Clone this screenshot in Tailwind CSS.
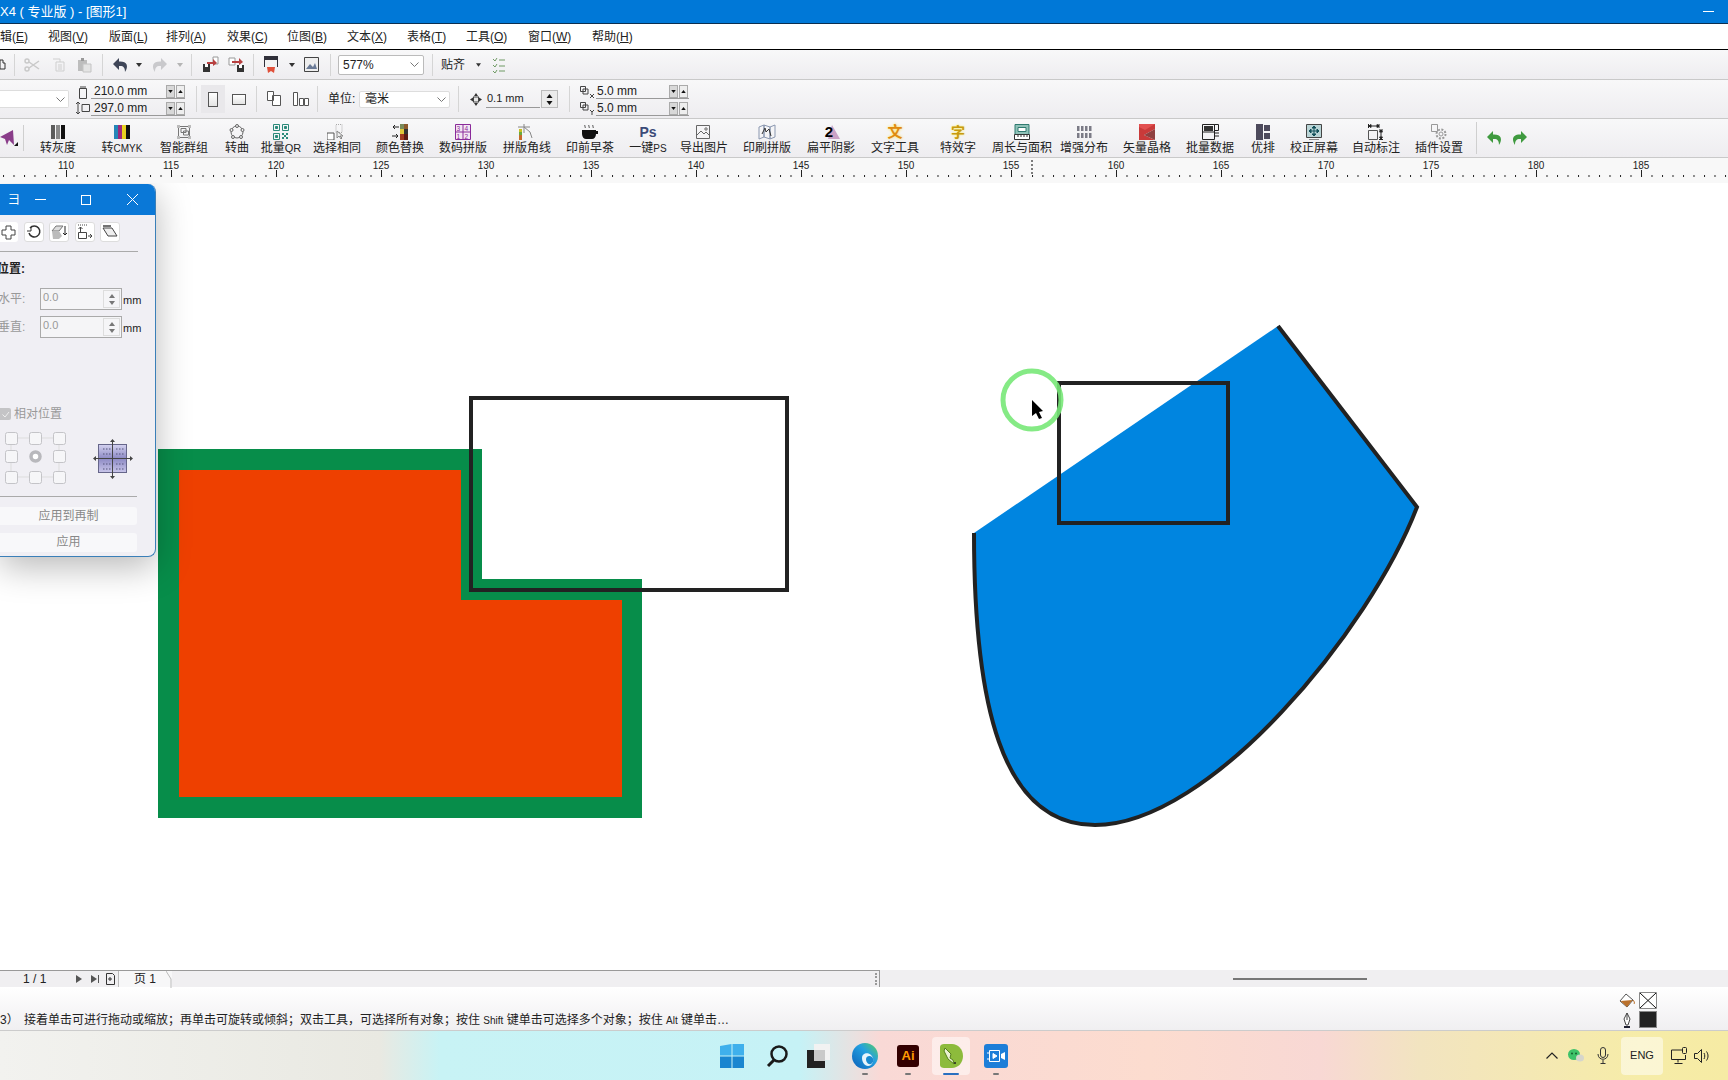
<!DOCTYPE html>
<html lang="zh-CN">
<head>
    <meta charset="UTF-8">
    <title>CorelDRAW X4 - 图形1</title>
    <script src="https://cdn.jsdelivr.net/npm/@tailwindcss/browser@4"></script>
</head>
<body class="font-['Liberation_Sans','Noto_Sans_CJK_SC',sans-serif] text-[12px] text-[#222] overflow-hidden">
<div class="relative w-[1728px] h-[1080px] flex flex-col overflow-hidden bg-white">

    <!-- Title bar -->
    <div class="h-[24px] shrink-0 bg-[#0078d7] border-b border-[#0b2f50] flex items-center justify-between text-white text-[13px]">
        <span class="whitespace-nowrap">X4 ( 专业版 ) - [图形1]</span>
        <div class="w-[11px] h-px bg-white mr-[14px]"></div>
    </div>

    <!-- Menu -->
    <div class="h-[26px] shrink-0 bg-white border-b border-black flex items-center whitespace-nowrap">
        <span class="w-[60px] -ml-[12px] shrink-0">编辑(<u>E</u>)</span>
        <span class="w-[61px] shrink-0">视图(<u>V</u>)</span>
        <span class="w-[57px] shrink-0">版面(<u>L</u>)</span>
        <span class="w-[61px] shrink-0">排列(<u>A</u>)</span>
        <span class="w-[60px] shrink-0">效果(<u>C</u>)</span>
        <span class="w-[60px] shrink-0">位图(<u>B</u>)</span>
        <span class="w-[60px] shrink-0">文本(<u>X</u>)</span>
        <span class="w-[59px] shrink-0">表格(<u>T</u>)</span>
        <span class="w-[62px] shrink-0">工具(<u>O</u>)</span>
        <span class="w-[64px] shrink-0">窗口(<u>W</u>)</span>
        <span>帮助(<u>H</u>)</span>
    </div>

    <!-- Standard toolbar -->
    <div class="h-[30px] shrink-0 bg-linear-to-b from-[#f8f8f9] to-[#eeedf0] border-b border-[#c9c9c9] flex items-center whitespace-nowrap">
        <svg class="w-[6px] h-[16px] shrink-0" viewBox="0 0 6 16"><path d="M0 3h3v3h2v6H0z" fill="none" stroke="#333"/></svg>
        <div class="ml-[8px] w-px h-[22px] bg-[#d5d5d5]"></div>
        <svg class="ml-[9px] w-[16px] h-[16px] shrink-0" viewBox="0 0 16 16" fill="none" stroke="#c9c9c9" stroke-width="1.5"><circle cx="3" cy="4" r="2"/><circle cx="3" cy="12" r="2"/><path d="M5 5l10 7M5 11l10-7"/></svg>
        <svg class="ml-[12px] w-[13px] h-[14px] shrink-0" viewBox="0 0 13 14" fill="none" stroke="#cfcfcf"><path d="M1 1h7v3M4 4h8v9H4zM6 7h4M6 9h4M6 11h4"/></svg>
        <svg class="ml-[12px] w-[15px] h-[16px] shrink-0" viewBox="0 0 15 16"><path d="M1 3h9v11H1z" fill="#bdbdbd"/><path d="M4 1h3v3H4z" fill="#999"/><path d="M6 7h8v8H6z" fill="#e4e4e4" stroke="#c4c4c4"/></svg>
        <div class="ml-[10px] w-px h-[22px] bg-[#d5d5d5]"></div>
        <svg class="ml-[10px] w-[16px] h-[16px] shrink-0" viewBox="0 0 16 16"><path d="M6 1L0 7l6 6V9c4-.5 6 1 6 6 4-6 2-11-6-10.500z" fill="#3f4658"/></svg>
        <svg class="ml-[7px] w-[6px] h-[4px] shrink-0" viewBox="0 0 6 4"><path d="M0 0h6L3 4z" fill="#333"/></svg>
        <svg class="ml-[9px] w-[16px] h-[16px] shrink-0 -scale-x-100" viewBox="0 0 16 16"><path d="M6 1L0 7l6 6V9c4-.5 6 1 6 6 4-6 2-11-6-10.500z" fill="#c9c9cc"/></svg>
        <svg class="ml-[10px] w-[6px] h-[4px] shrink-0" viewBox="0 0 6 4"><path d="M0 0h6L3 4z" fill="#b5b5b5"/></svg>
        <div class="ml-[8px] w-px h-[22px] bg-[#d5d5d5]"></div>
        <svg class="ml-[10px] w-[17px] h-[17px] shrink-0" viewBox="0 0 17 17"><path d="M11 1h5v7h-5z" fill="#fff" stroke="#999"/><path d="M1 8h7v8H1z" fill="#333"/><path d="M3 8h3v3H3z" fill="#fff"/><path d="M5 6h6V3l4 4-4 3V8H5z" fill="#b84040"/></svg>
        <svg class="ml-[9px] w-[17px] h-[17px] shrink-0" viewBox="0 0 17 17"><path d="M1 2h6v7H1z" fill="#fff" stroke="#999"/><path d="M9 9h7v7H9z" fill="#333"/><path d="M11 9h3v3h-3z" fill="#fff"/><path d="M4 5h7V2l4 4-4 3V7H4z" fill="#b84040"/></svg>
        <div class="ml-[8px] w-px h-[22px] bg-[#d5d5d5]"></div>
        <svg class="ml-[10px] w-[14px] h-[18px] shrink-0" viewBox="0 0 14 18"><path d="M0 0h14v11H0z" fill="#30303a"/><path d="M1 4h12v7H1z" fill="#f3f3f3"/><path d="M3 11h8l-1 6-3-2-3 2z" fill="#e0503a"/></svg>
        <svg class="ml-[11px] w-[6px] h-[4px] shrink-0" viewBox="0 0 6 4"><path d="M0 0h6L3 4z" fill="#333"/></svg>
        <svg class="ml-[9px] w-[15px] h-[15px] shrink-0" viewBox="0 0 15 15"><path d="M.5.500h14v14H.5z" fill="#eee" stroke="#444"/><path d="M2 12l4-5 3 3 2-4 2 6z" fill="#6a7a96"/></svg>
        <div class="ml-[11px] w-px h-[22px] bg-[#d5d5d5]"></div>
        <div class="ml-[7px] w-[86px] h-[20px] bg-white border border-[#bbb] rounded-[2px] flex items-center justify-between px-[4px]">
            <span>577%</span>
            <svg class="w-[9px] h-[5px]" viewBox="0 0 9 5"><path d="M.5.500l4 4 4-4" fill="none" stroke="#777"/></svg>
        </div>
        <div class="ml-[8px] w-px h-[22px] bg-[#d5d5d5]"></div>
        <span class="ml-[8px]">贴齐</span>
        <svg class="ml-[11px] w-[5px] h-[4px] shrink-0" viewBox="0 0 6 4"><path d="M0 0h6L3 4z" fill="#333"/></svg>
        <svg class="ml-[12px] w-[12px] h-[16px] shrink-0" viewBox="0 0 12 16" fill="none" stroke="#6f9a64"><path d="M0 2l2 2 2-3M0 8l2 2 2-3M0 14l2 2 2-3M6 3h6M6 9h6M6 14h6"/></svg>
    </div>

    <!-- Property bar -->
    <div class="h-[39px] shrink-0 bg-linear-to-b from-[#f8f8f9] to-[#eeedf0] border-b border-[#c9c9c9] flex items-center whitespace-nowrap">
        <div class="w-[69px] h-[18px] bg-white border-r border-y border-[#ddd] rounded-r-[2px] flex items-center justify-end pr-[3px]">
            <svg class="w-[9px] h-[5px]" viewBox="0 0 9 5"><path d="M.5.500l4 4 4-4" fill="none" stroke="#777"/></svg>
        </div>
        <div class="ml-[7px] mt-[2px] flex flex-col gap-[3px]">
            <svg class="w-[14px] h-[13px]" viewBox="0 0 14 13" fill="none" stroke="#444"><path d="M4 1h6M7 1v0M3.500 2.500h7v10h-7z"/></svg>
            <svg class="w-[14px] h-[12px]" viewBox="0 0 14 12" fill="none" stroke="#444"><path d="M2 0v12M0 2l2-2 2 2M0 10l2 2 2-2M6 2.500h7.500v7H6z"/></svg>
        </div>
        <div class="ml-[1px] mt-[2px] flex flex-col gap-[2px] w-[94px]">
            <div class="flex items-center h-[15px] border-b border-[#999]"><span class="w-[75px] pl-[3px]">210.0 mm</span><span class="w-[9px] h-[13px] bg-[#d8d8d8] border border-[#aaa] flex items-center justify-center"><svg class="w-[5px] h-[3px]" viewBox="0 0 6 4"><path d="M0 0h6L3 4z" fill="#111"/></svg></span><span class="ml-px w-[9px] h-[13px] bg-[#eee] border border-[#aaa] flex items-center justify-center"><svg class="w-[5px] h-[3px]" viewBox="0 0 6 4"><path d="M0 4h6L3 0z" fill="#111"/></svg></span></div>
            <div class="flex items-center h-[15px] border-b border-[#999]"><span class="w-[75px] pl-[3px]">297.0 mm</span><span class="w-[9px] h-[13px] bg-[#d8d8d8] border border-[#aaa] flex items-center justify-center"><svg class="w-[5px] h-[3px]" viewBox="0 0 6 4"><path d="M0 0h6L3 4z" fill="#111"/></svg></span><span class="ml-px w-[9px] h-[13px] bg-[#eee] border border-[#aaa] flex items-center justify-center"><svg class="w-[5px] h-[3px]" viewBox="0 0 6 4"><path d="M0 4h6L3 0z" fill="#111"/></svg></span></div>
        </div>
        <div class="ml-[11px] w-px h-[26px] bg-[#d5d5d5]"></div>
        <div class="ml-[4px] w-[24px] h-[28px] bg-[#e9e8eb] flex items-center justify-center"><div class="w-[10px] h-[15px] bg-linear-to-b from-white to-[#e4e4e4] border border-[#555]"></div></div>
        <div class="ml-[7px] w-[14px] h-[11px] bg-linear-to-b from-white to-[#e4e4e4] border border-[#555]"></div>
        <div class="ml-[10px] w-px h-[26px] bg-[#d5d5d5]"></div>
        <svg class="ml-[10px] w-[16px] h-[16px] shrink-0" viewBox="0 0 16 16" fill="#fff" stroke="#555"><path d="M.5.500h6v9h-6zM5.500 4.500h8v10h-8z"/></svg>
        <svg class="ml-[10px] w-[16px] h-[14px] shrink-0" viewBox="0 0 16 14" fill="#fff" stroke="#555"><path d="M.5.500h4v13h-4zM6.500 6.500h4v7h-4zM11.500 6.500h4v7h-4z"/></svg>
        <div class="ml-[8px] w-px h-[26px] bg-[#d5d5d5]"></div>
        <span class="ml-[10px] w-[31px]">单位:</span>
        <div class="w-[91px] h-[17px] bg-white border border-[#ddd] rounded-[2px] flex items-center justify-between pl-[5px] pr-[3px]">
            <span>毫米</span>
            <svg class="w-[9px] h-[5px]" viewBox="0 0 9 5"><path d="M.5.500l4 4 4-4" fill="none" stroke="#777"/></svg>
        </div>
        <div class="ml-[8px] w-px h-[26px] bg-[#d5d5d5]"></div>
        <svg class="ml-[11px] w-[12px] h-[13px] shrink-0" viewBox="0 0 12 13"><path d="M6 0l2 3H4zM6 13l2-3H4zM0 6.500l3-2v4zM12 6.500l-3-2v4z" fill="#333"/><rect x="3.500" y="4" width="5" height="5" fill="#e8e8e8" stroke="#444"/></svg>
        <div class="ml-[4px] w-[54px] h-[18px] border-b border-[#999] flex items-center pl-[1px] text-[11px]">0.1 mm</div>
        <div class="ml-[1px] w-[17px] h-[18px] bg-[#ebebeb] border border-[#bbb] flex flex-col items-center justify-center gap-[3px]">
            <svg class="w-[7px] h-[4px]" viewBox="0 0 6 4"><path d="M0 4h6L3 0z" fill="#111"/></svg>
            <svg class="w-[7px] h-[4px]" viewBox="0 0 6 4"><path d="M0 0h6L3 4z" fill="#111"/></svg>
        </div>
        <div class="ml-[11px] w-px h-[26px] bg-[#d5d5d5]"></div>
        <div class="ml-[10px] mt-[2px] flex flex-col gap-[3px]">
            <svg class="w-[14px] h-[13px]" viewBox="0 0 14 13" fill="none" stroke="#444"><path d="M.5.500h5v5h-5zM3 3h5v5H3zM10 8l4 4M14 8l-4 4"/></svg>
            <svg class="w-[14px] h-[13px]" viewBox="0 0 14 13" fill="none" stroke="#444"><path d="M.5.500h5v5h-5zM3 3h5v5H3zM10 8l2 2 2-2M12 10v3"/></svg>
        </div>
        <div class="ml-[2px] mt-[2px] flex flex-col gap-[2px] w-[93px]">
            <div class="flex items-center h-[15px] border-b border-[#999]"><span class="w-[73px] pl-[1px]">5.0 mm</span><span class="w-[9px] h-[13px] bg-[#d8d8d8] border border-[#aaa] flex items-center justify-center"><svg class="w-[5px] h-[3px]" viewBox="0 0 6 4"><path d="M0 0h6L3 4z" fill="#111"/></svg></span><span class="ml-px w-[9px] h-[13px] bg-[#eee] border border-[#aaa] flex items-center justify-center"><svg class="w-[5px] h-[3px]" viewBox="0 0 6 4"><path d="M0 4h6L3 0z" fill="#111"/></svg></span></div>
            <div class="flex items-center h-[15px] border-b border-[#999]"><span class="w-[73px] pl-[1px]">5.0 mm</span><span class="w-[9px] h-[13px] bg-[#d8d8d8] border border-[#aaa] flex items-center justify-center"><svg class="w-[5px] h-[3px]" viewBox="0 0 6 4"><path d="M0 0h6L3 4z" fill="#111"/></svg></span><span class="ml-px w-[9px] h-[13px] bg-[#eee] border border-[#aaa] flex items-center justify-center"><svg class="w-[5px] h-[3px]" viewBox="0 0 6 4"><path d="M0 4h6L3 0z" fill="#111"/></svg></span></div>
        </div>
    </div>

    <!-- Plugin toolbar -->
    <div class="h-[39px] shrink-0 bg-linear-to-b from-[#f8f8f9] to-[#eeedf0] border-b border-[#c9c9c9] flex items-center whitespace-nowrap">
        <div class="w-[23px] shrink-0 h-full flex items-center">
            <svg class="w-[20px] h-[20px]" viewBox="0 0 20 20"><path d="M0 9L13 2l1 15-5-5-2 5-2-6z" fill="#8a3d8a"/><path d="M14 18l4-4v4z" fill="#111"/></svg>
        </div>
        <div class="w-px h-[26px] bg-[#cfcfcf] shrink-0"></div>
        <div class="ml-[2px] flex h-full">
            <div class="w-[64px] shrink-0 flex flex-col items-center pt-[5px]">
                <svg class="w-[16px] h-[16px]" viewBox="0 0 16 16"><path d="M1 1h4v14H1z" fill="#5c5c5c"/><path d="M6 1h4v14H6z" fill="#8a8a8a"/><path d="M11 1h4v14h-4z" fill="#111"/></svg>
                <span class="leading-[16px]">转灰度</span>
            </div>
            <div class="w-[64px] shrink-0 flex flex-col items-center pt-[5px]">
                <svg class="w-[16px] h-[16px]" viewBox="0 0 16 16"><path d="M0 1h4v14H0z" fill="#2586b8"/><path d="M4 1h4v14H4z" fill="#9c2a7c"/><path d="M8 1h4v14H8z" fill="#e8d020"/><path d="M12 1h4v14h-4z" fill="#111"/></svg>
                <span class="leading-[16px]">转<span class="text-[10px]">CMYK</span></span>
            </div>
            <div class="w-[60px] shrink-0 flex flex-col items-center pt-[5px]">
                <svg class="w-[16px] h-[16px]" viewBox="0 0 16 16" fill="none" stroke="#777"><path d="M2.500 2.500h11v11h-11zM5 4.500h5v4H5zM7.500 7h5v4h-5z"/><path d="M1 1h3v3H1zM12 1h3v3h-3zM1 12h3v3H1zM12 12h3v3h-3z" fill="#bbb" stroke="none"/></svg>
                <span class="leading-[16px]">智能群组</span>
            </div>
            <div class="w-[46px] shrink-0 flex flex-col items-center pt-[5px]">
                <svg class="w-[16px] h-[16px]" viewBox="0 0 16 16" fill="#eee" stroke="#666"><circle cx="8" cy="8" r="6" fill="none"/><circle cx="8" cy="2" r="1.500"/><circle cx="2.500" cy="6" r="1.500"/><circle cx="13.500" cy="6" r="1.500"/><circle cx="4" cy="13" r="1.500"/><circle cx="12" cy="13" r="1.500"/></svg>
                <span class="leading-[16px]">转曲</span>
            </div>
            <div class="w-[42px] shrink-0 flex flex-col items-center pt-[5px]">
                <svg class="w-[16px] h-[16px]" viewBox="0 0 16 16" fill="none" stroke="#2b8a7a"><path d="M.5.500h6v6h-6zM9.500.500h6v6h-6zM.5 9.500h6v6h-6z"/><path d="M2.500 2.500h2v2h-2zM11.500 2.500h2v2h-2zM2.500 11.500h2v2h-2z" fill="#2b8a7a"/><path d="M9 9h2v2H9zM13 9h2v2h-2zM11 11h2v2h-2zM9 13h2v2H9zM13 13h2v2h-2z" fill="#2b8a7a" stroke="none"/></svg>
                <span class="leading-[16px]">批量<span class="text-[11px]">QR</span></span>
            </div>
            <div class="w-[70px] shrink-0 flex flex-col items-center pt-[5px]">
                <svg class="w-[20px] h-[16px]" viewBox="0 0 20 16" fill="none"><path d="M0 9h7v7H0z" fill="#fff" stroke="#555"/><path d="M9 .5h6v8H9z" stroke="#aaa" stroke-dasharray="1 1"/><path d="M10 7v7l2-2 2 3 1-1-2-2h3z" fill="#eee" stroke="#888"/></svg>
                <span class="leading-[16px]">选择相同</span>
            </div>
            <div class="w-[56px] shrink-0 flex flex-col items-center pt-[5px]">
                <svg class="w-[18px] h-[16px]" viewBox="0 0 18 16"><path d="M8 3H2m2-2L2 3l2 2M1 12h6m-2-2l2 2-2 2" fill="none" stroke="#222"/><path d="M9 0h4v5H9z" fill="#7a8a5a"/><path d="M13 0h4v5h-4z" fill="#8c5a2c"/><path d="M9 5h4v5H9z" fill="#e0c83a"/><path d="M13 5h4v5h-4z" fill="#333"/><path d="M9 10h4v6H9z" fill="#a03a20"/><path d="M13 10h4v6h-4z" fill="#5a1a14"/></svg>
                <span class="leading-[16px]">颜色替换</span>
            </div>
            <div class="w-[70px] shrink-0 flex flex-col items-center pt-[5px]">
                <svg class="w-[16px] h-[16px]" viewBox="0 0 16 16"><path d="M.5.500h15v15H.5zM.5 8h15M8 .500v15" fill="#f3e6f3" stroke="#8a2a9a"/><text x="1.500" y="7" font-size="6.500" fill="#8a2a9a">3</text><text x="9.500" y="7" font-size="6.500" fill="#8a2a9a">4</text><text x="1.500" y="14.500" font-size="6.500" fill="#8a2a9a">1</text><text x="9.500" y="14.500" font-size="6.500" fill="#8a2a9a">2</text></svg>
                <span class="leading-[16px]">数码拼版</span>
            </div>
            <div class="w-[58px] shrink-0 flex flex-col items-center pt-[5px]">
                <svg class="w-[18px] h-[16px]" viewBox="0 0 18 16" fill="none"><path d="M6 0v9M0 3h12M6 3l6 5 2 6" stroke="#888"/><path d="M1 5h3v3H1z" fill="#c8c020"/><path d="M1 8h3v3H1z" fill="#6aa83a"/><path d="M1 11h3v5H1z" fill="#c66a2a"/></svg>
                <span class="leading-[16px]">拼版角线</span>
            </div>
            <div class="w-[68px] shrink-0 flex flex-col items-center pt-[5px]">
                <svg class="w-[18px] h-[16px]" viewBox="0 0 18 16"><path d="M4 1c-1 1 1 2 0 3M8 1c-1 1 1 2 0 3M12 1c-1 1 1 2 0 3" fill="none" stroke="#444"/><path d="M1 6h14v4c0 3-2 5-4 5H5c-2 0-4-2-4-5z" fill="#111"/><path d="M15 7h2v3h-3z" fill="#111"/></svg>
                <span class="leading-[16px]">印前早茶</span>
            </div>
            <div class="w-[48px] shrink-0 flex flex-col items-center pt-[5px]">
                <span class="h-[16px] leading-[16px] text-[14px] font-bold text-[#3b4a78]">Ps</span>
                <span class="leading-[16px]">一键<span class="text-[10px]">PS</span></span>
            </div>
            <div class="w-[64px] shrink-0 flex flex-col items-center pt-[5px]">
                <svg class="w-[16px] h-[16px]" viewBox="0 0 16 16" fill="none" stroke="#666"><path d="M.5 1.500h13v13H.5z"/><path d="M1 11l4-4 3 3 2-2 3 3"/><circle cx="10" cy="5" r="1.200"/></svg>
                <span class="leading-[16px]">导出图片</span>
            </div>
            <div class="w-[62px] shrink-0 flex flex-col items-center pt-[5px]">
                <svg class="w-[18px] h-[16px]" viewBox="0 0 18 16" fill="none" stroke="#8a97b0"><path d="M1 3l5-2v12l-5 2zM6 1l6 2v12l-6-2zM12 3l5-2v12l-5 2z"/><path d="M4 10l3-6 1 4 3-3 2 7" stroke="#333"/></svg>
                <span class="leading-[16px]">印刷拼版</span>
            </div>
            <div class="w-[66px] shrink-0 flex flex-col items-center pt-[5px]">
                <div class="relative w-[16px] h-[16px] leading-[16px] text-[15px] font-bold text-black text-center">
                    <svg class="absolute left-[5px] top-[1px] w-[12px] h-[14px]" viewBox="0 0 12 14"><path d="M4 0l8 14H0z" fill="#cba3c6"/></svg>
                    <span class="relative -left-[2px]">2</span>
                </div>
                <span class="leading-[16px]">扁平阴影</span>
            </div>
            <div class="w-[62px] shrink-0 flex flex-col items-center pt-[5px]">
                <span class="h-[16px] leading-[16px] text-[15px] font-bold text-[#e08a10] [text-shadow:0_0_3px_#f8e050]">文</span>
                <span class="leading-[16px]">文字工具</span>
            </div>
            <div class="w-[64px] shrink-0 flex flex-col items-center pt-[5px]">
                <span class="h-[16px] leading-[16px] text-[14px] font-bold text-[#c89a10] [text-shadow:0_0_2px_#f8ec50]">字</span>
                <span class="leading-[16px]">特效字</span>
            </div>
            <div class="w-[64px] shrink-0 flex flex-col items-center pt-[5px]">
                <svg class="w-[16px] h-[16px]" viewBox="0 0 16 16"><path d="M1 .5h14v10H1z" fill="#8fc2b8" stroke="#2f7a70"/><path d="M4 3.500h8v4H4z" fill="#fff" stroke="#2f7a70"/><path d="M.5 10.500h15v5H.5z" fill="#fff" stroke="#333"/><path d="M4 11v2M7 11v2M10 11v2M13 11v2" stroke="#333"/></svg>
                <span class="leading-[16px]">周长与面积</span>
            </div>
            <div class="w-[60px] shrink-0 flex flex-col items-center pt-[5px]">
                <svg class="w-[15px] h-[16px]" viewBox="0 0 15 16" fill="#7b7b86"><path d="M0 2h2.500v5H0zM4 2h2.500v5H4zM8 2h2.500v5H8zM12 2h2.500v5H12zM0 9h2.500v5H0zM4 9h2.500v5H4zM8 9h2.500v5H8zM12 9h2.500v5H12z"/></svg>
                <span class="leading-[16px]">增强分布</span>
            </div>
            <div class="w-[66px] shrink-0 flex flex-col items-center pt-[5px]">
                <svg class="w-[16px] h-[16px]" viewBox="0 0 16 16"><path d="M0 0h16v5L5 11l11 5H0z" fill="#c93a3a"/><path d="M16 5v11L5 11z" fill="#8f4040"/><path d="M0 0h16L6 6 0 3z" fill="#e25050"/></svg>
                <span class="leading-[16px]">矢量晶格</span>
            </div>
            <div class="w-[60px] shrink-0 flex flex-col items-center pt-[5px]">
                <svg class="w-[17px] h-[16px]" viewBox="0 0 17 16" fill="none" stroke="#222"><path d="M.5.500h12v15H.5zM.5 8h12"/><path d="M2 2h9v5H2z" fill="#333" stroke="none"/><path d="M12.500.500h4v6h-4zM13 9h4M13 12h4" /></svg>
                <span class="leading-[16px]">批量数据</span>
            </div>
            <div class="w-[46px] shrink-0 flex flex-col items-center pt-[5px]">
                <svg class="w-[15px] h-[16px]" viewBox="0 0 15 16" fill="#4d4a5c"><path d="M0 0h7v16H0zM8 1h6v6H8zM8 9h6v6H8z"/></svg>
                <span class="leading-[16px]">优排</span>
            </div>
            <div class="w-[56px] shrink-0 flex flex-col items-center pt-[5px]">
                <svg class="w-[16px] h-[16px]" viewBox="0 0 16 16"><path d="M.5.500h15v13H.5z" fill="#b9d4d6" stroke="#444"/><path d="M8 2v10M3 7h10M8 2L6 4h4zM8 12l-2-2h4zM3 7l2-2v4zM13 7l-2-2v4z" stroke="#13505a" fill="#13505a"/><path d="M3 15.500h10" stroke="#888"/></svg>
                <span class="leading-[16px]">校正屏幕</span>
            </div>
            <div class="w-[68px] shrink-0 flex flex-col items-center pt-[5px]">
                <svg class="w-[16px] h-[16px]" viewBox="0 0 16 16" fill="none" stroke="#222"><path d="M.5 0v4M11 0v4M1 2h10"/><path d="M.5 6.500h9v9h-9z" stroke="#555"/><path d="M11 6h4M11 15.500h4M13 6v9" /><path d="M1 2l2-1.500v3zM11 2L9 .500v3zM13 6l-1.500 2h3zM13 15l-1.500-2h3z" fill="#222"/></svg>
                <span class="leading-[16px]">自动标注</span>
            </div>
            <div class="w-[58px] shrink-0 flex flex-col items-center pt-[5px]">
                <svg class="w-[16px] h-[16px]" viewBox="0 0 16 16" fill="none" stroke="#999"><path d="M.5.500h6v7h-6z"/><circle cx="10" cy="10" r="2"/><circle cx="10" cy="10" r="4.500" stroke-dasharray="2 1.500" stroke-width="2"/></svg>
                <span class="leading-[16px]">插件设置</span>
            </div>
        </div>
        <div class="ml-[8px] w-px h-[32px] bg-[#cfcfcf] shrink-0"></div>
        <svg class="ml-[10px] w-[16px] h-[16px] shrink-0" viewBox="0 0 16 16"><path d="M6 1L0 7l6 6V9c4-.5 6 1 6 6 4-6 2-11-6-10.500z" fill="#3f9a3f"/></svg>
        <svg class="ml-[8px] w-[16px] h-[16px] shrink-0 -scale-x-100" viewBox="0 0 16 16"><path d="M6 1L0 7l6 6V9c4-.5 6 1 6 6 4-6 2-11-6-10.500z" fill="#3f9a3f"/></svg>
    </div>

    <!-- Ruler -->
    <div class="h-[25px] shrink-0 bg-[#f8f8f8]">
        <svg class="block" width="1728" height="25">
            <defs>
                <pattern id="rulerTicks" x="3" y="0" width="10.5" height="25" patternUnits="userSpaceOnUse"><rect x="0" y="17" width="1" height="2" fill="#222"/></pattern>
                <pattern id="rulerMajor" x="66" y="0" width="105" height="25" patternUnits="userSpaceOnUse"><rect x="0" y="12" width="1" height="7" fill="#222"/></pattern>
            </defs>
            <rect width="1728" height="25" fill="url(#rulerTicks)"/>
            <rect width="1728" height="25" fill="url(#rulerMajor)"/>
            <path d="M1032 2v16" stroke="#000" stroke-dasharray="2 2"/>
            <g font-size="10" fill="#222" text-anchor="middle">
                <text x="66" y="11">110</text><text x="171" y="11">115</text><text x="276" y="11">120</text><text x="381" y="11">125</text>
                <text x="486" y="11">130</text><text x="591" y="11">135</text><text x="696" y="11">140</text><text x="801" y="11">145</text>
                <text x="906" y="11">150</text><text x="1011" y="11">155</text><text x="1116" y="11">160</text><text x="1221" y="11">165</text>
                <text x="1326" y="11">170</text><text x="1431" y="11">175</text><text x="1536" y="11">180</text><text x="1641" y="11">185</text>
            </g>
        </svg>
    </div>

    <!-- Canvas -->
    <div class="relative flex-1 min-h-0 bg-white overflow-hidden">
        <svg class="absolute left-0 top-0" width="1728" height="787" viewBox="0 183 1728 787">
            <path d="M158 449H482V579H642V818H158Z" fill="#078d4a"/>
            <path d="M179 470H461V600H622V797H179Z" fill="#ee4000"/>
            <rect x="471" y="398" width="316" height="192" fill="none" stroke="#222" stroke-width="4"/>
            <path d="M1278 326L1417 507C1370 630 1210 825 1095 825C1000 825 974 700 974 533Z" fill="#0085e0"/>
            <path d="M974 533C974 700 1000 825 1095 825C1210 825 1370 630 1417 507L1278 326" fill="none" stroke="#222" stroke-width="4"/>
            <rect x="1059" y="383" width="169" height="140" fill="none" stroke="#222" stroke-width="4"/>
            <circle cx="1032" cy="400" r="29" fill="none" stroke="#78e878" stroke-width="5" stroke-opacity="0.9"/>
            <path d="M1032 400V416L1036 413L1039 419L1042 418L1039 412L1043 411Z" fill="#000"/>
        </svg>

        <!-- Transform docker -->
        <div class="absolute left-0 top-[1px] w-[156px] h-[373px] bg-[#f0eff4] rounded-r-lg border-r border-b border-[#3a7fb8] shadow-[0_10px_35px_rgba(0,0,0,0.28)] overflow-hidden whitespace-nowrap">
            <div class="h-[31px] bg-[#0a78d7] flex items-center text-white">
                <span class="ml-[8px] w-[27px]">彐</span>
                <div class="w-[11px] h-px bg-white"></div>
                <div class="ml-[35px] w-[10px] h-[10px] border border-white"></div>
                <svg class="ml-[36px] w-[11px] h-[11px]" viewBox="0 0 11 11"><path d="M0 0l11 11M11 0L0 11" stroke="#fff"/></svg>
            </div>
            <div class="mt-[7px] flex">
                <div class="w-[18px] h-[20px] bg-white rounded-r-[3px] flex items-center justify-end pr-[2px]">
                    <svg class="w-[15px] h-[15px]" viewBox="0 0 15 15" fill="none" stroke="#444"><path d="M5 5V1h5v4h4v5h-4v4H5v-4H1V5z"/></svg>
                </div>
                <div class="ml-[6px] w-[20px] h-[20px] bg-white border border-[#ddd] rounded-[3px] flex items-center justify-center">
                    <svg class="w-[14px] h-[14px]" viewBox="0 0 14 14" fill="none" stroke="#333" stroke-width="1.500"><path d="M3 3a5.500 5.500 0 1 1-1 5"/><path d="M0 6h4V2" stroke-width="1"/></svg>
                </div>
                <div class="ml-[5px] w-[20px] h-[20px] bg-white border border-[#ddd] rounded-[3px] flex items-center justify-center">
                    <svg class="w-[16px] h-[16px]" viewBox="0 0 16 16"><path d="M1 7l4-5h7L8 7z" fill="#ddd" stroke="#777"/><path d="M1 7h7l3 5-3 3H2z" fill="#bbb"/><path d="M14 2v9m-2-2l2 2 2-2" fill="none" stroke="#222"/></svg>
                </div>
                <div class="ml-[6px] w-[20px] h-[20px] bg-white border border-[#ddd] rounded-[3px] flex items-center justify-center">
                    <svg class="w-[16px] h-[16px]" viewBox="0 0 16 16" fill="none" stroke="#444"><path d="M1 1h9" stroke-dasharray="1 1"/><path d="M3.500 3v5M1.500 5l2-2 2 2"/><path d="M1.500 8.500h8v6h-8zM11 12h4M13 10l2 2-2 2"/></svg>
                </div>
                <div class="ml-[5px] w-[20px] h-[20px] bg-white border border-[#ddd] rounded-[3px] flex items-center justify-center">
                    <svg class="w-[16px] h-[14px]" viewBox="0 0 16 14" fill="none" stroke="#444"><path d="M1 3l9 0 5 8H6z" fill="#eee"/><path d="M1 1h8" stroke-width="1.500"/></svg>
                </div>
            </div>
            <div class="mt-[9px] mr-[17px] h-px bg-[#aaa]"></div>
            <div class="mt-[8px] -ml-[3px] h-[18px] leading-[18px] font-bold">位置:</div>
            <div class="mt-[10px] h-[22px] flex items-center">
                <span class="-ml-[2px] w-[42px] text-[#999]">水平:</span>
                <div class="w-[82px] h-[22px] bg-[#f5f5f7] border border-[#aaa] flex justify-between pl-[2px] pr-px text-[11px] text-[#999]">
                    <span>0.0</span>
                    <div class="w-[17px] flex flex-col items-center justify-center gap-[3px] border border-[#ddd] my-px">
                        <svg class="w-[6px] h-[4px]" viewBox="0 0 6 4"><path d="M0 4h6L3 0z" fill="#777"/></svg>
                        <svg class="w-[6px] h-[4px]" viewBox="0 0 6 4"><path d="M0 0h6L3 4z" fill="#777"/></svg>
                    </div>
                </div>
                <span class="ml-[1px] text-[11px] text-[#222] pt-[2px]">mm</span>
            </div>
            <div class="mt-[6px] h-[22px] flex items-center">
                <span class="-ml-[2px] w-[42px] text-[#999]">垂直:</span>
                <div class="w-[82px] h-[22px] bg-[#f5f5f7] border border-[#aaa] flex justify-between pl-[2px] pr-px text-[11px] text-[#999]">
                    <span>0.0</span>
                    <div class="w-[17px] flex flex-col items-center justify-center gap-[3px] border border-[#ddd] my-px">
                        <svg class="w-[6px] h-[4px]" viewBox="0 0 6 4"><path d="M0 4h6L3 0z" fill="#777"/></svg>
                        <svg class="w-[6px] h-[4px]" viewBox="0 0 6 4"><path d="M0 0h6L3 4z" fill="#777"/></svg>
                    </div>
                </div>
                <span class="ml-[1px] text-[11px] text-[#222] pt-[2px]">mm</span>
            </div>
            <div class="mt-[69px] flex items-center h-[14px] text-[#999]">
                <div class="w-[11px] h-[12px] bg-[#c4c4c6] rounded-r-[2px] flex items-center justify-center">
                    <svg class="w-[8px] h-[7px]" viewBox="0 0 8 7"><path d="M.5 3.500l2.500 2.500 4-5" fill="none" stroke="#eee"/></svg>
                </div>
                <span class="ml-[3px] text-[12px]">相对位置</span>
            </div>
            <div class="mt-[11px] flex items-start">
                <svg class="ml-[5px] w-[62px] h-[53px]" viewBox="0 0 62 53" fill="#f6f6f8" stroke="#c4c4c8">
                    <path d="M12 6h12M36 6h12M6 12v6M54 12v6M6 31v8M54 31v8M12 45h12M36 45h12" stroke="#ddd"/>
                    <rect x=".5" y=".5" width="12" height="12" rx="2"/><rect x="24.500" y=".5" width="12" height="12" rx="2"/><rect x="48.500" y=".5" width="12" height="12" rx="2"/>
                    <rect x=".5" y="18.500" width="12" height="12" rx="2"/><rect x="48.500" y="18.500" width="12" height="12" rx="2"/>
                    <circle cx="30.500" cy="24.500" r="4.500" fill="#fff" stroke="#b8b8bc" stroke-width="3.500"/>
                    <rect x=".5" y="39.500" width="12" height="12" rx="2"/><rect x="24.500" y="39.500" width="12" height="12" rx="2"/><rect x="48.500" y="39.500" width="12" height="12" rx="2"/>
                </svg>
                <svg class="ml-[26px] mt-[7px] w-[40px] h-[40px]" viewBox="0 0 40 40">
                    <defs><linearGradient id="gridFill" x1="0" y1="0" x2="0" y2="1"><stop offset="0" stop-color="#d4d2f0"/><stop offset="0.5" stop-color="#8d8ac4"/><stop offset="1" stop-color="#c9c6ea"/></linearGradient></defs>
                    <rect x="5.500" y="5.500" width="28" height="28" fill="url(#gridFill)" stroke="#66668a"/>
                    <path d="M10 10h8M10 15h8M23 10h8M23 15h8M10 25h8M10 30h8M23 25h8M23 30h8" stroke="#55557a" stroke-dasharray="1.500 1.500"/>
                    <path d="M19.500 1v38M1 19.500h38" stroke="#444"/>
                    <path d="M19.500 0l-2.500 3h5zM19.500 40l-2.500-3h5zM0 19.500l3-2.500v5zM40 19.500l-3-2.500v5z" fill="#444"/>
                </svg>
            </div>
            <div class="mt-[11px] mr-[18px] h-px bg-[#aaa]"></div>
            <div class="mt-[10px] mr-[18px] h-[18px] bg-[#f8f8fa] rounded-r-[3px] text-center leading-[18px] text-[#888]">应用到再制</div>
            <div class="mt-[8px] mr-[18px] h-[19px] bg-[#f8f8fa] rounded-r-[3px] text-center leading-[19px] text-[#888]">应用</div>
        </div>
    </div>

    <!-- Page tabs -->
    <div class="h-[17px] shrink-0 bg-[#f0eff1] flex items-center whitespace-nowrap">
        <div class="w-[880px] h-full border-t border-r border-[#999] flex items-center">
            <span class="ml-[23px] w-[27px]">1 / 1</span>
            <svg class="ml-[26px] w-[6px] h-[8px]" viewBox="0 0 6 8"><path d="M0 0l6 4-6 4z" fill="#555"/></svg>
            <svg class="ml-[9px] w-[8px] h-[8px]" viewBox="0 0 8 8"><path d="M0 0l6 4-6 4zM7 0h1v8H7z" fill="#555"/></svg>
            <svg class="ml-[7px] w-[9px] h-[12px]" viewBox="0 0 9 12" fill="none" stroke="#333"><path d="M.5.500h6l2 2v9h-8zM2 6h4M4 4v4"/></svg>
            <div class="ml-[3px] h-full border-l border-[#bbb] pl-[15px] pr-[16px] bg-[#f7f7f8] flex items-center relative">
                <span>页 1</span>
                <svg class="absolute right-0 top-0 w-[6px] h-[17px]" viewBox="0 0 6 17"><path d="M0 0l5 8v9" fill="none" stroke="#bbb"/></svg>
            </div>
            <div class="ml-auto mr-[2px] h-[12px] border-r-2 border-dotted border-[#999]"></div>
        </div>
        <div class="ml-[353px] w-[134px] h-[2px] bg-[#777]"></div>
    </div>

    <!-- Status bar -->
    <div class="h-[44px] shrink-0 bg-linear-to-b from-white to-[#f0eff1] border-b border-[#ccc] flex whitespace-nowrap">
        <div class="flex items-end pb-[1px]">
            <span class="w-[24px]">3）</span>
            <span>接着单击可进行拖动或缩放；再单击可旋转或倾斜；双击工具，可选择所有对象；按住 <span class="text-[10px]">Shift</span> 键单击可选择多个对象；按住 <span class="text-[10px]">Alt</span> 键单击…</span>
        </div>
        <div class="ml-auto mr-[71px] pt-[5px] flex flex-col gap-[2px]">
            <div class="flex items-center gap-[4px]">
                <svg class="w-[16px] h-[15px]" viewBox="0 0 16 15"><path d="M7 1l7 6-6 7-7-6z" fill="#fff" stroke="#555"/><path d="M1.500 8l12-1-5.500 7z" fill="#b9702c"/><path d="M14 7c1 1 2 3 1 4" fill="none" stroke="#b9702c"/></svg>
                <svg class="w-[18px] h-[17px]" viewBox="0 0 18 17"><path d="M.5.500h17v16H.5z" fill="#fff" stroke="#888"/><path d="M1 1l16 15M17 1L1 16" stroke="#111"/></svg>
            </div>
            <div class="flex items-center gap-[4px]">
                <svg class="w-[16px] h-[16px]" viewBox="0 0 16 16" fill="none" stroke="#444"><path d="M8 1l3 6-2 6H7L5 7z" fill="#fff"/><path d="M8 1v7"/><path d="M5 15h6" stroke="#223" stroke-width="2"/></svg>
                <div class="w-[18px] h-[17px] bg-[#222] border border-[#888]"></div>
            </div>
        </div>
    </div>

    <!-- Taskbar -->
    <div class="h-[49px] shrink-0 relative flex items-center bg-[linear-gradient(90deg,#f2f2ef_0,#e9e9e2_380px,#c8f3f5_440px,#c6f2f6_800px,#f9d9d6_880px,#fcdccf_1150px,#f8d8d4_1320px,#f2e4c0_1420px,#f6eca8_1640px,#f6eba4_1728px)]">
        <div class="ml-[713px] w-[38px] h-[38px] flex items-center justify-center">
            <svg class="w-[24px] h-[24px]" viewBox="0 0 24 24"><path d="M0 2l11.500-2v11.500H0z" fill="#3fb0ec"/><path d="M12.500 0H24v11.500H12.500z" fill="#3fb0ec"/><path d="M0 12.500h11.500V24H0z" fill="#1a86d0"/><path d="M12.500 12.500H24V24H12.500z" fill="#1a86d0"/></svg>
        </div>
        <div class="ml-[7px] w-[38px] h-[38px] flex items-center justify-center">
            <svg class="w-[24px] h-[24px]" viewBox="0 0 24 24" fill="none" stroke="#1a1a1a"><circle cx="14" cy="10" r="7.500" stroke-width="2.500"/><path d="M9 16l-6 6" stroke-width="3"/></svg>
        </div>
        <div class="ml-[4px] w-[38px] h-[38px] flex items-center justify-center">
            <svg class="w-[24px] h-[24px]" viewBox="0 0 24 24"><path d="M7 0h16v16H7z" fill="#f2f2f2"/><path d="M0 6h18v18H0z" fill="#222"/><path d="M7 6h11v11H7z" fill="#c9c9c9"/></svg>
        </div>
        <div class="ml-[8px] relative w-[38px] h-[38px] flex items-center justify-center">
            <svg class="w-[26px] h-[26px]" viewBox="0 0 26 26"><defs><linearGradient id="edgeFill" x1="0" y1="1" x2="1" y2="0"><stop offset="0" stop-color="#0c5fb8"/><stop offset="0.6" stop-color="#24a0e0"/><stop offset="1" stop-color="#5cd05c"/></linearGradient></defs><circle cx="13" cy="13" r="13" fill="url(#edgeFill)"/><path d="M10 15c0-5 6-6 9-3 3 3 3 7 0 10-5 3-9-2-9-7z" fill="#fff" fill-opacity="0.9"/><path d="M14 16c0-3 4-4 6-2 2 2 2 5-1 7-3 1-5-2-5-5z" fill="#1a8ad0"/></svg>
            <div class="absolute bottom-[0px] w-[6px] h-[2px] rounded-full bg-[#777]"></div>
        </div>
        <div class="ml-[5px] relative w-[38px] h-[38px] flex items-center justify-center">
            <div class="w-[22px] h-[22px] rounded-[3px] bg-[#300] text-[#ff9a00] text-[13px] font-bold flex items-center justify-center">Ai</div>
            <div class="absolute bottom-[0px] w-[6px] h-[2px] rounded-full bg-[#777]"></div>
        </div>
        <div class="ml-[5px] relative w-[38px] h-[38px] rounded-[4px] bg-white/50 flex items-center justify-center">
            <svg class="w-[24px] h-[26px]" viewBox="0 0 24 26"><path d="M1 4c0-2 2-3 4-3h8c6 0 11 5 11 12s-5 12-11 12H5c-2 0-4-1-4-3z" fill="#8dbb3c"/><path d="M6 5l6 6-1 4 3 2 1 4-6-5-4-8z" fill="#eaf2d0" stroke="#55801c"/><circle cx="16" cy="20" r="1" fill="#222"/></svg>
            <div class="absolute bottom-[0px] w-[16px] h-[2px] rounded-full bg-[#2a6fc0]"></div>
        </div>
        <div class="ml-[7px] relative w-[38px] h-[38px] flex items-center justify-center">
            <div class="w-[24px] h-[24px] rounded-[3px] bg-[#1d7ed8] flex items-center justify-center">
                <svg class="w-[18px] h-[14px]" viewBox="0 0 18 14" fill="none" stroke="#fff"><path d="M2.500 1.500h10v11h-10zM0 4h2M0 10h2"/><path d="M6 4.500l4 2.500-4 2.500z" fill="#fff"/><path d="M14 5l4-2v8l-4-2z" fill="#fff" stroke="none"/></svg>
            </div>
            <div class="absolute bottom-[0px] w-[6px] h-[2px] rounded-full bg-[#777]"></div>
        </div>
        <svg class="ml-[531px] w-[12px] h-[7px]" viewBox="0 0 12 7"><path d="M.5 6.500L6 1l5.500 5.500" fill="none" stroke="#222" stroke-width="1.200"/></svg>
        <svg class="ml-[10px] w-[16px] h-[13px]" viewBox="0 0 16 13"><ellipse cx="6" cy="5.500" rx="6" ry="5.500" fill="#3ec26a"/><ellipse cx="12" cy="9" rx="4" ry="3.500" fill="#d6d6cc"/><circle cx="4" cy="4.500" r="1" fill="#16602f"/><circle cx="8" cy="4.500" r="1" fill="#16602f"/></svg>
        <svg class="ml-[13px] w-[12px] h-[17px]" viewBox="0 0 12 17" fill="none" stroke="#333"><rect x="3.500" y=".5" width="5" height="10" rx="2.500"/><path d="M1 7c0 7 10 7 10 0M6 13v3M3.500 16.500h5"/></svg>
        <div class="ml-[12px] w-[42px] h-[38px] rounded-[4px] bg-white/50 flex items-center justify-center text-[11px]">ENG</div>
        <svg class="ml-[8px] w-[17px] h-[17px]" viewBox="0 0 17 17" fill="none" stroke="#222"><path d="M11 3H.5v9.500h14V8M7 12.500v3M3.500 16.500h8"/><rect x="11.500" y=".5" width="4" height="6" rx="1"/></svg>
        <svg class="ml-[6px] w-[16px] h-[14px]" viewBox="0 0 16 14" fill="none" stroke="#222"><path d="M.5 4.500h3l4-4v13l-4-4h-3zM10 4c1 2 1 4 0 6M12.500 2.500c2 3 2 6 0 9"/></svg>
    </div>
</div>
</body>
</html>
